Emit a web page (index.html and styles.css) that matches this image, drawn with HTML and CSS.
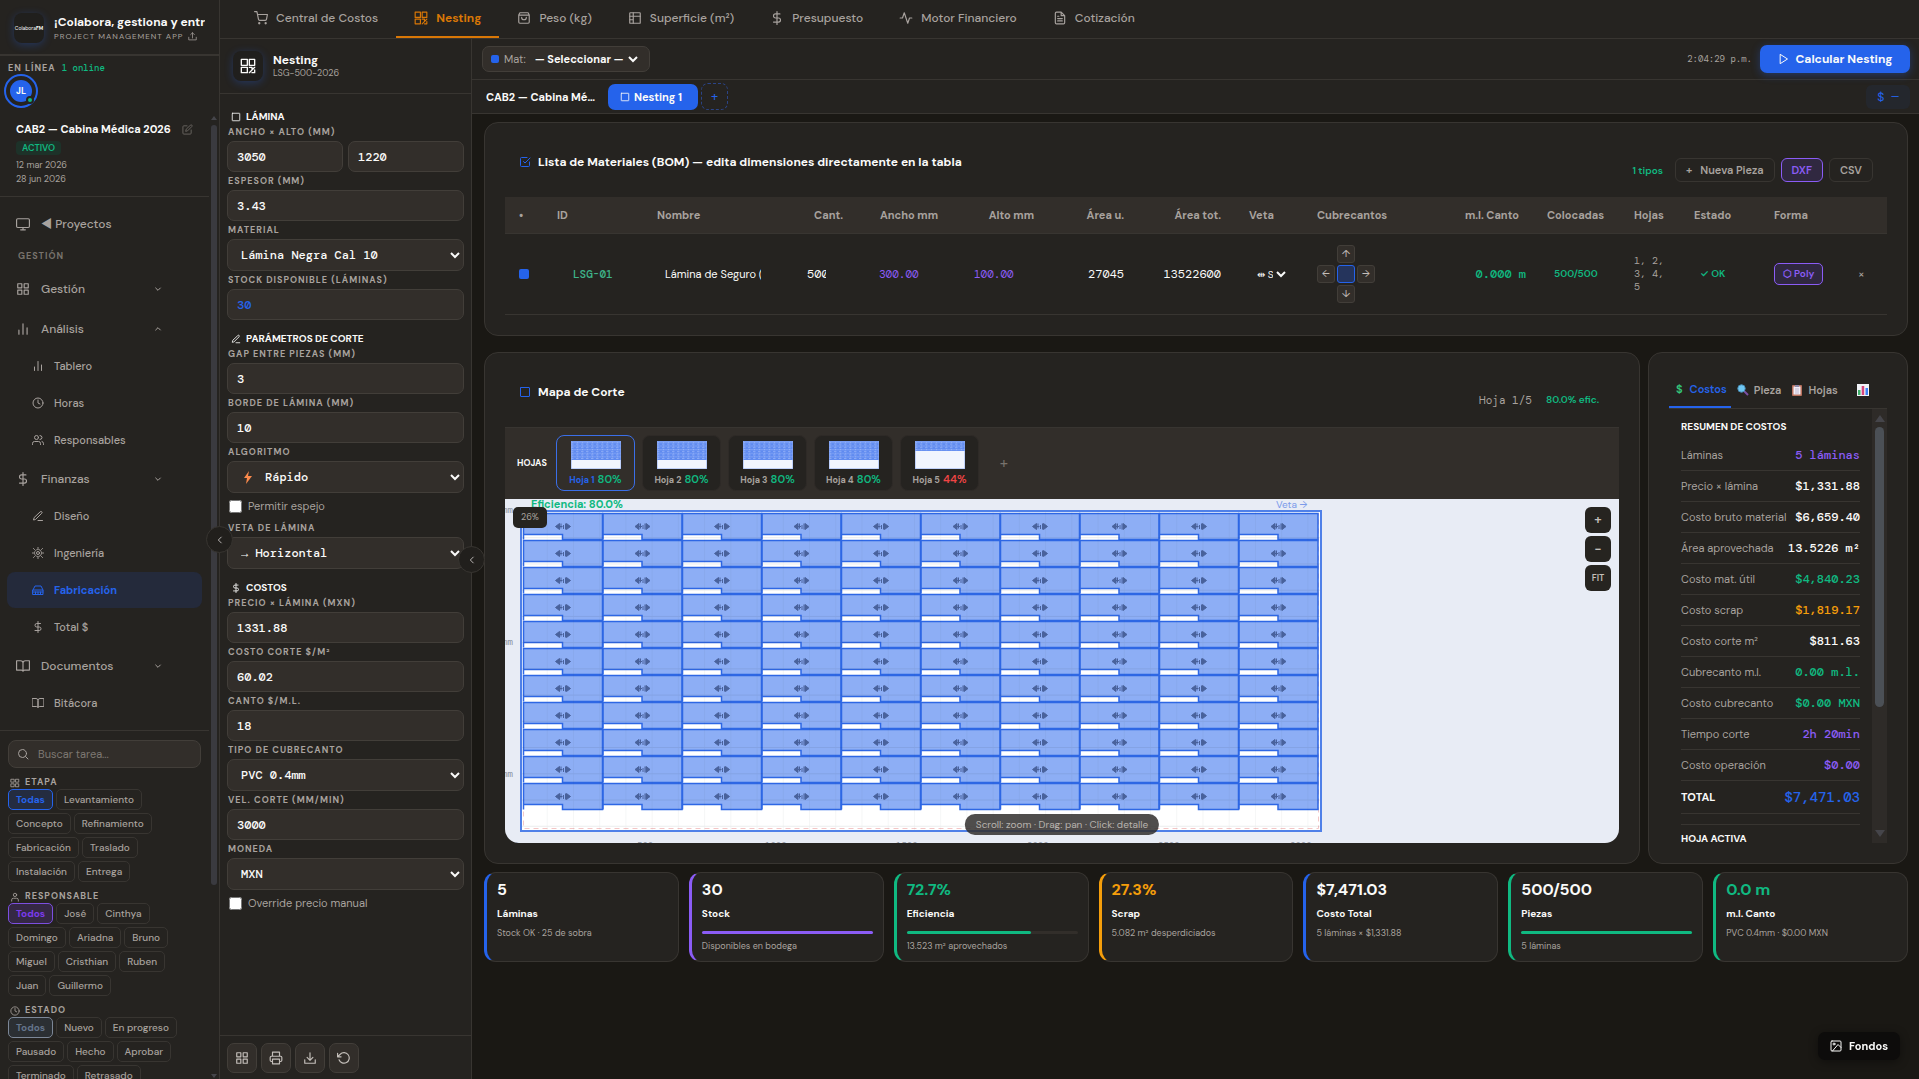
FILE: index.html
```html
<!DOCTYPE html>
<html lang="es">
<head>
  <meta charset="UTF-8" />
  <meta name="viewport" content="width=device-width, initial-scale=1.0"/>
  <title>Nesting — CAB2</title>
  <link rel="stylesheet" href="styles.css">
</head>
<body>

  <!-- Icons -->
  <svg class="sprite" aria-hidden="true">
    <symbol id="i-cart" viewBox="0 0 24 24"><circle cx="9" cy="21" r="1"/><circle cx="20" cy="21" r="1"/><path d="M1 1h4l2.7 13.4a2 2 0 0 0 2 1.6h9.7a2 2 0 0 0 2-1.6L23 6H6"/></symbol>
    <symbol id="i-nest" viewBox="0 0 24 24"><path d="M2 2h9v9H2zM14 2h8v9h-8zM2 14h9v8H2zM14 14h4v4M22 14l-8 8M18 22h4v-4"/></symbol>
    <symbol id="i-bag" viewBox="0 0 24 24"><path d="M5 3h14l2 4v12a2 2 0 0 1-2 2H5a2 2 0 0 1-2-2V7zM3 7h18M8 11a4 4 0 0 0 8 0"/></symbol>
    <symbol id="i-table" viewBox="0 0 24 24"><rect x="3" y="3" width="18" height="18" rx="1"/><path d="M3 9h18M9 3v18M3 15h6"/></symbol>
    <symbol id="i-dollar" viewBox="0 0 24 24"><path d="M12 1v22M17 5H9.500a3.500 3.500 0 0 0 0 7h5a3.500 3.500 0 0 1 0 7H6"/></symbol>
    <symbol id="i-pulse" viewBox="0 0 24 24"><path d="M22 12h-4l-3 9L9 3l-3 9H2"/></symbol>
    <symbol id="i-file" viewBox="0 0 24 24"><path d="M14 2H6a2 2 0 0 0-2 2v16a2 2 0 0 0 2 2h12a2 2 0 0 0 2-2V8zM14 2v6h6M16 13H8M16 17H8M10 9H8"/></symbol>
    <symbol id="i-up" viewBox="0 0 24 24"><path d="M2 14v7h20v-7M17 7l-5-5-5 5M12 2v14"/></symbol>
    <symbol id="i-down" viewBox="0 0 24 24"><path d="M3 15v6h18v-6M7 11l5 5 5-5M12 16V3"/></symbol>
    <symbol id="i-edit" viewBox="0 0 24 24"><path d="M11 4H4a2 2 0 0 0-2 2v14a2 2 0 0 0 2 2h14a2 2 0 0 0 2-2v-7M18.500 2.500a2.100 2.100 0 0 1 3 3L12 15l-4 1 1-4z"/></symbol>
    <symbol id="i-monitor" viewBox="0 0 24 24"><rect x="1" y="3" width="22" height="15" rx="2"/><path d="M8 22h8M12 18v4"/></symbol>
    <symbol id="i-grid" viewBox="0 0 24 24"><path d="M3 3h7v7H3zM14 3h7v7h-7zM14 14h7v7h-7zM3 14h7v7H3z"/></symbol>
    <symbol id="i-bars" viewBox="0 0 24 24"><path d="M19 21V10M12 21V3M5 21v-7"/></symbol>
    <symbol id="i-clock" viewBox="0 0 24 24"><circle cx="12" cy="12" r="10"/><path d="M12 6v6l4 2"/></symbol>
    <symbol id="i-users" viewBox="0 0 24 24"><path d="M17 21v-2a4 4 0 0 0-4-4H5a4 4 0 0 0-4 4v2M23 21v-2a4 4 0 0 0-3-4M16 3a4 4 0 0 1 0 8"/><circle cx="9" cy="7" r="4"/></symbol>
    <symbol id="i-user" viewBox="0 0 24 24"><path d="M20 22v-3a4 4 0 0 0-4-4H8a4 4 0 0 0-4 4v3"/><circle cx="12" cy="7" r="4"/></symbol>
    <symbol id="i-pen" viewBox="0 0 24 24"><path d="M12 21h9M16.500 3.500a2.100 2.100 0 0 1 3 3L7 19l-4 1 1-4z"/></symbol>
    <symbol id="i-gear" viewBox="0 0 24 24"><circle cx="12" cy="12" r="3"/><circle cx="12" cy="12" r="7" stroke-dasharray="3 2"/><path d="M12 1v2M12 21v2M1 12h2M21 12h2M3 3l2 2M19 19l2 2M3 21l2-2M19 5l2-2"/></symbol>
    <symbol id="i-factory" viewBox="0 0 24 24"><path d="M2 12h20v9H2zM2 12l4-8h12l4 8M2 16h20M7 16v5M12 16v5M17 16v5"/></symbol>
    <symbol id="i-book" viewBox="0 0 24 24"><path d="M1 3h7a4 4 0 0 1 4 4v14a3 3 0 0 0-3-2H1zM23 3h-7a4 4 0 0 0-4 4v14a3 3 0 0 1 3-2h8z"/></symbol>
    <symbol id="i-search" viewBox="0 0 24 24"><circle cx="11" cy="11" r="8"/><path d="M22 22l-5-5"/></symbol>
    <symbol id="i-square" viewBox="0 0 24 24"><rect x="3" y="3" width="18" height="18" rx="1"/></symbol>
    <symbol id="i-check" viewBox="0 0 24 24"><path d="M9 11l3 3L22 4M21 12v7a2 2 0 0 1-2 2H5a2 2 0 0 1-2-2V5a2 2 0 0 1 2-2h11"/></symbol>
    <symbol id="i-print" viewBox="0 0 24 24"><path d="M6 9V2h12v7M6 18H4a2 2 0 0 1-2-2v-5a2 2 0 0 1 2-2h16a2 2 0 0 1 2 2v5a2 2 0 0 1-2 2h-2M6 14h12v8H6z"/></symbol>
    <symbol id="i-undo" viewBox="0 0 24 24"><path d="M1 4v6h6M3.500 15a9 9 0 1 0 2-9.400L1 10"/></symbol>
    <symbol id="i-play" viewBox="0 0 24 24"><path d="M5 3l14 9-14 9z"/></symbol>
    <symbol id="i-image" viewBox="0 0 24 24"><rect x="2" y="2" width="20" height="20" rx="2"/><circle cx="8" cy="8" r="2"/><path d="M22 15l-6-6L5 22"/></symbol>
    <symbol id="i-chev" viewBox="0 0 24 24"><path d="M5 9l7 7 7-7"/></symbol>
    <symbol id="i-left" viewBox="0 0 24 24"><path d="M15 5l-7 7 7 7"/></symbol>
  </svg>

  <div class="app">
    <aside class="sidebar">
      <header class="brand">
        <div class="logo">Colabora<b>FM</b></div>
        <div class="brand-text">
          <div class="brand-name">¡Colabora, gestiona y entrega!</div>
          <div class="brand-sub">PROJECT MANAGEMENT APP <svg class="ic s9"><use href="#i-up"/></svg></div>
        </div>
      </header>
      <div class="online">
        <div class="online-title">EN LÍNEA <span>1 online</span></div>
        <div class="avatar"><span>JL</span><i></i></div>
      </div>

      <div class="side-wrap">
        <div class="side-scroll">
          <div class="project">
            <div class="project-name">CAB2 — Cabina Médica 2026 <svg class="ic s11"><use href="#i-edit"/></svg></div>
            <span class="badge">ACTIVO</span>
            <div class="date">12 mar 2026</div>
            <div class="date">28 jun 2026</div>
          </div>
          <nav class="menu">
            <a class="item top" href="#"><svg class="ic s14"><use href="#i-monitor"/></svg>◀ Proyectos</a>
            <div class="menu-label">GESTIÓN</div>
            <div class="group">
              <a class="item" href="#"><svg class="ic s14"><use href="#i-grid"/></svg>Gestión<svg class="ic s8 chev"><use href="#i-chev"/></svg></a>
            </div>
            <div class="group">
              <a class="item" href="#"><svg class="ic s14"><use href="#i-bars"/></svg>Análisis<svg class="ic s8 chev open"><use href="#i-chev"/></svg></a>
              <div class="children">
                <a class="child" href="#"><svg class="ic s12"><use href="#i-bars"/></svg>Tablero</a>
                <a class="child" href="#"><svg class="ic s12"><use href="#i-clock"/></svg>Horas</a>
                <a class="child" href="#"><svg class="ic s12"><use href="#i-users"/></svg>Responsables</a>
              </div>
            </div>
            <div class="group">
              <a class="item" href="#"><svg class="ic s14"><use href="#i-dollar"/></svg>Finanzas<svg class="ic s8 chev"><use href="#i-chev"/></svg></a>
              <div class="children">
                <a class="child" href="#"><svg class="ic s12"><use href="#i-pen"/></svg>Diseño</a>
                <a class="child" href="#"><svg class="ic s12"><use href="#i-gear"/></svg>Ingeniería</a>
                <a class="child active" href="#"><svg class="ic s12"><use href="#i-factory"/></svg>Fabricación</a>
                <a class="child" href="#"><svg class="ic s12"><use href="#i-dollar"/></svg>Total $</a>
              </div>
            </div>
            <div class="group">
              <a class="item" href="#"><svg class="ic s14"><use href="#i-book"/></svg>Documentos<svg class="ic s8 chev"><use href="#i-chev"/></svg></a>
              <div class="children">
                <a class="child" href="#"><svg class="ic s12"><use href="#i-book"/></svg>Bitácora</a>
              </div>
            </div>
          </nav>

          <div class="filters">
            <label class="search"><svg class="ic s12"><use href="#i-search"/></svg><input type="text" placeholder="Buscar tarea..." aria-label="Buscar tarea"></label>
            <div class="filter-title"><svg class="ic s10"><use href="#i-grid"/></svg>ETAPA</div>
            <div class="chips">
              <button class="chip blue">Todas</button><button class="chip">Levantamiento</button><button class="chip">Concepto</button><button class="chip">Refinamiento</button><button class="chip">Fabricación</button><button class="chip">Traslado</button><button class="chip">Instalación</button><button class="chip">Entrega</button>
            </div>
            <div class="filter-title"><svg class="ic s10"><use href="#i-user"/></svg>RESPONSABLE</div>
            <div class="chips">
              <button class="chip purple">Todos</button><button class="chip">José</button><button class="chip">Cinthya</button><button class="chip">Domingo</button><button class="chip">Ariadna</button><button class="chip">Bruno</button><button class="chip">Miguel</button><button class="chip">Cristhian</button><button class="chip">Ruben</button><button class="chip">Juan</button><button class="chip">Guillermo</button>
            </div>
            <div class="filter-title"><svg class="ic s10"><use href="#i-clock"/></svg>ESTADO</div>
            <div class="chips">
              <button class="chip gray">Todos</button><button class="chip">Nuevo</button><button class="chip">En progreso</button><button class="chip">Pausado</button><button class="chip">Hecho</button><button class="chip">Aprobar</button><button class="chip">Terminado</button><button class="chip">Retrasado</button>
            </div>
          </div>
        </div>
        <div class="bar"><span class="arrow up"></span><span class="thumb"></span><span class="arrow"></span></div>
      </div>
      <button class="collapse" aria-label="Contraer menú"><svg class="ic s10"><use href="#i-left"/></svg></button>
    </aside>

    <div class="work">
      <nav class="tabs">
        <a href="#"><svg class="ic s14"><use href="#i-cart"/></svg>Central de Costos</a>
        <a href="#" class="active"><svg class="ic s14"><use href="#i-nest"/></svg>Nesting</a>
        <a href="#"><svg class="ic s14"><use href="#i-bag"/></svg>Peso (kg)</a>
        <a href="#"><svg class="ic s14"><use href="#i-table"/></svg>Superficie (m²)</a>
        <a href="#"><svg class="ic s14"><use href="#i-dollar"/></svg>Presupuesto</a>
        <a href="#"><svg class="ic s14"><use href="#i-pulse"/></svg>Motor Financiero</a>
        <a href="#"><svg class="ic s14"><use href="#i-file"/></svg>Cotización</a>
      </nav>

      <div class="columns">
        <section class="params">
          <header class="params-head">
            <div class="params-icon"><svg class="ic s16"><use href="#i-nest"/></svg></div>
            <div><div class="params-title">Nesting</div><div class="params-sub">LSG-500-2026</div></div>
          </header>
          <form class="fields">
            <h3><svg class="ic s10"><use href="#i-square"/></svg>LÁMINA</h3>
            <label for="ancho">ANCHO × ALTO (MM)</label>
            <div class="pair"><input id="ancho" value="3050"><input id="alto" value="1220" aria-label="Alto (mm)"></div>
            <label for="espesor">ESPESOR (MM)</label>
            <input id="espesor" value="3.43">
            <label for="material">MATERIAL</label>
            <select id="material"><option>Lámina Negra Cal 10</option></select>
            <label for="stock">STOCK DISPONIBLE (LÁMINAS)</label>
            <input id="stock" class="stock" value="30">
            <h3><svg class="ic s10"><use href="#i-pen"/></svg>PARÁMETROS DE CORTE</h3>
            <label for="gap">GAP ENTRE PIEZAS (MM)</label>
            <input id="gap" value="3">
            <label for="borde">BORDE DE LÁMINA (MM)</label>
            <input id="borde" value="10">
            <label for="algoritmo">ALGORITMO</label>
            <div class="with-icon">
              <select id="algoritmo"><option>Rápido</option></select>
              <svg class="bolt" viewBox="0 0 8 13"><path d="M5 0L0 7h3l-1 6 6-8H4z" fill="#fb8a4c"/></svg>
            </div>
            <div class="tick"><input type="checkbox" id="espejo"><label for="espejo">Permitir espejo</label></div>
            <label for="veta">VETA DE LÁMINA</label>
            <select id="veta"><option>→ Horizontal</option></select>
            <h3><svg class="ic s10"><use href="#i-dollar"/></svg>COSTOS</h3>
            <label for="precio">PRECIO × LÁMINA (MXN)</label>
            <input id="precio" value="1331.88">
            <label for="corte">COSTO CORTE $/M²</label>
            <input id="corte" value="60.02">
            <label for="canto">CANTO $/M.L.</label>
            <input id="canto" value="18">
            <label for="cubre">TIPO DE CUBRECANTO</label>
            <select id="cubre"><option>PVC 0.4mm</option></select>
            <label for="vel">VEL. CORTE (MM/MIN)</label>
            <input id="vel" value="3000">
            <label for="moneda">MONEDA</label>
            <select id="moneda"><option>MXN</option></select>
            <div class="tick"><input type="checkbox" id="override"><label for="override">Override precio manual</label></div>
          </form>
          <footer class="params-foot">
            <button aria-label="Cuadrícula"><svg class="ic s14"><use href="#i-grid"/></svg></button>
            <button aria-label="Imprimir"><svg class="ic s14"><use href="#i-print"/></svg></button>
            <button aria-label="Descargar"><svg class="ic s14"><use href="#i-down"/></svg></button>
            <button aria-label="Restablecer"><svg class="ic s14"><use href="#i-undo"/></svg></button>
          </footer>
          <button class="collapse low" aria-label="Contraer parámetros"><svg class="ic s10"><use href="#i-left"/></svg></button>
        </section>

        <main class="main">
          <div class="toolbar">
            <label class="mat"><i class="dot"></i>Mat: <select><option>— Seleccionar —</option></select></label>
            <time class="clock">2:04:29 p.m.</time>
            <button class="primary"><svg class="ic s12"><use href="#i-play"/></svg>Calcular Nesting</button>
          </div>
          <div class="sheets">
            <div class="sheets-name">CAB2 — Cabina Médica 2026</div>
            <button class="sheet-tab"><svg class="ic s10"><use href="#i-square"/></svg>Nesting 1</button>
            <button class="sheet-add" aria-label="Agregar nesting">+</button>
            <div class="sheet-cost">$ —</div>
          </div>

          <div class="content">
            <section class="card bom">
              <header class="card-head">
                <h2><svg class="ic s12"><use href="#i-check"/></svg>Lista de Materiales (BOM) — edita dimensiones directamente en la tabla</h2>
                <div class="actions">
                  <span class="count">1 tipos</span>
                  <button class="small">+&nbsp;&nbsp; Nueva Pieza</button>
                  <button class="small violet">DXF</button>
                  <button class="small">CSV</button>
                </div>
              </header>
              <table class="bom-table">
                <colgroup><col class="w38"><col class="w100"><col class="w142"><col class="w72"><col class="w95"><col class="w96"><col class="w90"><col class="w97"><col class="w68"><col class="w130"><col class="w100"><col class="w87"><col class="w60"><col class="w80"><col class="w80"><col class="w47"></colgroup>
                <thead>
                  <tr><th>•</th><th>ID</th><th>Nombre</th><th class="r">Cant.</th><th class="r">Ancho mm</th><th class="r">Alto mm</th><th class="r">Área u.</th><th class="r">Área tot.</th><th>Veta</th><th>Cubrecantos</th><th class="r">m.l. Canto</th><th>Colocadas</th><th>Hojas</th><th>Estado</th><th>Forma</th><th></th></tr>
                </thead>
                <tbody>
                  <tr>
                    <td><i class="swatch"></i></td>
                    <td class="id">LSG-01</td>
                    <td><input class="cell name" value="Lámina de Seguro (500)" aria-label="Nombre"></td>
                    <td class="r"><input class="cell qty" value="500" aria-label="Cantidad"></td>
                    <td class="r"><input class="cell dim" value="300.00" aria-label="Ancho mm"></td>
                    <td class="r"><input class="cell dim" value="100.00" aria-label="Alto mm"></td>
                    <td class="r mono">27045</td>
                    <td class="r mono">13522600</td>
                    <td><select class="grain" aria-label="Veta"><option>⇹ Seg</option></select></td>
                    <td>
                      <div class="edges"><button class="n" aria-label="Canto superior">↑</button><button class="w" aria-label="Canto izquierdo">←</button><span></span><button class="e" aria-label="Canto derecho">→</button><button class="s" aria-label="Canto inferior">↓</button></div>
                    </td>
                    <td class="r ml">0.000 m</td>
                    <td class="placed">500/500</td>
                    <td class="pages">1, 2, 3, 4, 5</td>
                    <td class="ok">✓ OK</td>
                    <td><button class="poly">⬡ Poly</button></td>
                    <td><button class="del" aria-label="Eliminar">×</button></td>
                  </tr>
                </tbody>
              </table>
            </section>

            <div class="split">
              <section class="card">
                <header class="card-head">
                  <h2><svg class="ic s14"><use href="#i-square"/></svg>Mapa de Corte</h2>
                  <div class="actions map-info"><span class="page">Hoja 1/5</span><span class="count">80.0% efic.</span></div>
                </header>
                <div class="strip">
                  <span class="strip-label">HOJAS</span>
                  <button class="leaf on"><svg viewBox="0 0 50 28"><rect width="50" height="28" fill="#f1f5fe"/><rect width="50" height="19" fill="url(#mini)"/><path d="M0 0h50v28H0z" fill="none" stroke="#8fadf5"/></svg><span>Hoja 1 <b>80%</b></span></button>
                  <button class="leaf"><svg viewBox="0 0 50 28"><rect width="50" height="28" fill="#f1f5fe"/><rect width="50" height="19" fill="url(#mini)"/><path d="M0 0h50v28H0z" fill="none" stroke="#8fadf5"/></svg><span>Hoja 2 <b>80%</b></span></button>
                  <button class="leaf"><svg viewBox="0 0 50 28"><rect width="50" height="28" fill="#f1f5fe"/><rect width="50" height="19" fill="url(#mini)"/><path d="M0 0h50v28H0z" fill="none" stroke="#8fadf5"/></svg><span>Hoja 3 <b>80%</b></span></button>
                  <button class="leaf"><svg viewBox="0 0 50 28"><rect width="50" height="28" fill="#f1f5fe"/><rect width="50" height="19" fill="url(#mini)"/><path d="M0 0h50v28H0z" fill="none" stroke="#8fadf5"/></svg><span>Hoja 4 <b>80%</b></span></button>
                  <button class="leaf bad"><svg viewBox="0 0 50 28"><rect width="50" height="28" fill="#f1f5fe"/><rect width="50" height="10" fill="url(#mini)"/><path d="M0 0h50v28H0z" fill="none" stroke="#8fadf5"/></svg><span>Hoja 5 <b>44%</b></span></button>
                  <button class="leaf-add" aria-label="Agregar hoja">+</button>
                </div>
                <div class="map">
                  <svg class="map-svg" width="100%" height="344">
                    <defs>
                      <pattern id="mini" width="5" height="3.600" patternUnits="userSpaceOnUse"><rect width="5" height="3.600" fill="#608bf0"/><path d="M.5 1.500h2M3.500 1.500h1" stroke="#94b2f8"/><path d="M0 3.200h2.500" stroke="#a9c0f8" stroke-width=".6"/></pattern>
                      <pattern id="gridlines" x="15.500" y="12" width="26.230" height="26.230" patternUnits="userSpaceOnUse"><path d="M0 0v26.230M0 .5h26.230" stroke="#1e293b" stroke-opacity=".09"/></pattern>
                      <g id="piece">
                        <path d="M0 0H79V26H39V21H0Z" fill="#2563eb" fill-opacity=".52"/>
                        <path d="M0 26V0H79V26H39V21H0" fill="none" stroke="#2e67e4" stroke-width="1.500"/>
                        <path d="M32 13l4-3v6zM47 13l-4-3v6zM34 13h5M37.500 10v5M40 11.500v4M42 10v6" fill="#33497f" stroke="#33497f" opacity=".75"/>
                      </g>
                      <g id="line"><use href="#piece"/><use href="#piece" x="79.500"/><use href="#piece" x="159"/><use href="#piece" x="238.500"/><use href="#piece" x="318"/><use href="#piece" x="397.500"/><use href="#piece" x="477"/><use href="#piece" x="556.500"/><use href="#piece" x="636"/><use href="#piece" x="715.500"/></g>
                    </defs>
                    <rect x="16" y="12" width="800" height="320" fill="#fff"/>
                    <rect x="18.500" y="14.500" width="795" height="315" fill="none" stroke="#f3c6c6" stroke-dasharray="5 4"/>
                    <g transform="translate(18.500 14.500)">
                      <use href="#line"/><use href="#line" y="27"/><use href="#line" y="54"/><use href="#line" y="81"/><use href="#line" y="108"/><use href="#line" y="135"/><use href="#line" y="162"/><use href="#line" y="189"/><use href="#line" y="216"/><use href="#line" y="243"/><use href="#line" y="270"/>
                    </g>
                    <rect x="16" y="12" width="800" height="320" fill="url(#gridlines)"/>
                    <rect x="16" y="12" width="800" height="320" fill="none" stroke="#4f80e8" stroke-width="2"/>
                    <text class="eff" x="26" y="9">Eficiencia: 80.0%</text>
                    <text class="veta" x="771" y="9">Veta →</text>
                    <g class="axis">
                      <text x="8" y="350">0</text><text x="132" y="350">500</text><text x="260" y="350">1000</text><text x="391" y="350">1500</text><text x="522" y="350">2000</text><text x="653" y="350">2500</text><text x="785" y="350">3000</text>
                      <text x="-3" y="14">mm</text><text x="-3" y="146">mm</text><text x="-3" y="278">mm</text>
                    </g>
                  </svg>
                  <span class="zoom-level">26%</span>
                  <div class="zoom"><button aria-label="Acercar">+</button><button aria-label="Alejar">−</button><button class="fit">FIT</button></div>
                  <div class="hint">Scroll: zoom · Drag: pan · Click: detalle</div>
                </div>
              </section>

              <section class="card info">
                <nav class="info-tabs">
                  <a href="#" class="active"><span class="cash">$</span> Costos</a>
                  <a href="#"><svg class="em" viewBox="0 0 12 12"><path d="M7 7l4 4" stroke="#7b4fa3" stroke-width="2"/><circle cx="4.500" cy="4.500" r="3.700" fill="#6fc7f2" stroke="#4a8fb8"/></svg>Pieza</a>
                  <a href="#"><svg class="em" viewBox="0 0 12 12"><rect x="1" y="1" width="10" height="11" rx="1" fill="#b8705c"/><path d="M2.500 2.500h7v8h-7z" fill="#f4eef6"/><path d="M4 1h4v2H4z" fill="#8f8aa8"/><path d="M4 5h4M4 7h4M4 9h4" stroke="#a7a0c0" stroke-width=".7"/></svg>Hojas</a>
                  <a href="#" aria-label="Gráficas"><svg class="em" viewBox="0 0 12 12"><path d="M0 0h12v12H0z" fill="#f1f3f8"/><path d="M1 6h2.500v5H1z" fill="#3fae6a"/><path d="M4.700 2h2.500v9H4.700z" fill="#d8467c"/><path d="M8.500 4H11v7H8.500z" fill="#3b82f6"/></svg></a>
                </nav>
                <div class="info-body">
                  <div class="info-list">
                    <h4>RESUMEN DE COSTOS</h4>
                    <dl>
                      <div><dt>Láminas</dt><dd class="violet-t">5 láminas</dd></div>
                      <div><dt>Precio × lámina</dt><dd>$1,331.88</dd></div>
                      <div><dt>Costo bruto material</dt><dd>$6,659.40</dd></div>
                      <div><dt>Área aprovechada</dt><dd>13.5226 m²</dd></div>
                      <div><dt>Costo mat. útil</dt><dd class="green-t">$4,840.23</dd></div>
                      <div><dt>Costo scrap</dt><dd class="amber-t">$1,819.17</dd></div>
                      <div><dt>Costo corte m²</dt><dd>$811.63</dd></div>
                      <div><dt>Cubrecanto m.l.</dt><dd class="green-t">0.00 m.l.</dd></div>
                      <div><dt>Costo cubrecanto</dt><dd class="green-t">$0.00 MXN</dd></div>
                      <div><dt>Tiempo corte</dt><dd class="violet-t">2h 20min</dd></div>
                      <div><dt>Costo operación</dt><dd class="violet-t">$0.00</dd></div>
                      <div class="total"><dt>TOTAL</dt><dd>$7,471.03</dd></div>
                    </dl>
                    <h4 class="next">HOJA ACTIVA</h4>
                  </div>
                  <div class="bar wide"><span class="arrow up"></span><span class="thumb"></span><span class="arrow"></span></div>
                </div>
              </section>
            </div>

            <div class="kpis">
              <div class="kpi blue-k"><strong>5</strong><h5>Láminas</h5><p>Stock OK · 25 de sobra</p></div>
              <div class="kpi violet-k"><strong>30</strong><h5>Stock</h5><div class="meter"><i style="width:100%"></i></div><p>Disponibles en bodega</p></div>
              <div class="kpi green-k"><strong class="green-t">72.7%</strong><h5>Eficiencia</h5><div class="meter"><i style="width:72.7%"></i></div><p>13.523 m² aprovechados</p></div>
              <div class="kpi amber-k"><strong class="amber-t">27.3%</strong><h5>Scrap</h5><p>5.082 m² desperdiciados</p></div>
              <div class="kpi blue-k"><strong>$7,471.03</strong><h5>Costo Total</h5><p>5 láminas × $1,331.88</p></div>
              <div class="kpi green-k"><strong>500/500</strong><h5>Piezas</h5><div class="meter"><i style="width:100%"></i></div><p>5 láminas</p></div>
              <div class="kpi green-k"><strong class="green-t">0.0 m</strong><h5>m.l. Canto</h5><p>PVC 0.4mm · $0.00 MXN</p></div>
            </div>
          </div>
        </main>
      </div>
    </div>
  </div>

  <button class="fondos"><svg class="ic s12"><use href="#i-image"/></svg>Fondos</button>

</body>
</html>
```
FILE: styles.css
```css
:root {
  --bg: #1a1814;
  --panel: #252320;
  --field: #322e2a;
  --line: #383531;
  --muted: #a8a29e;
  --text: #fafaf9;
  --blue: #2563eb;
  --green: #10b981;
  --violet: #8b5cf6;
  --amber: #f59e0b;
  --mono: "DM Mono", "Liberation Mono", monospace;
}

* {
  box-sizing: border-box;
}

body {
  margin: 0;
  height: 100vh;
  overflow: hidden;
  background: var(--bg);
  color: var(--text);
  font-family: "DM Sans", Inter, sans-serif;
  font-size: 12px;
}

button,
input,
select {
  font: inherit;
  color: inherit;
  margin: 0;
}

button {
  padding: 0;
  cursor: pointer;
}

a {
  color: inherit;
  text-decoration: none;
}

h2, h3, h4, h5, p, dl, dd {
  margin: 0;
}

.sprite {
  position: absolute;
  width: 0;
  height: 0;
}

.ic {
  flex: none;
  fill: none;
  stroke: currentColor;
  stroke-width: 2;
  stroke-linecap: round;
  stroke-linejoin: round;
}

.s8 { width: 8px; height: 8px; }
.s9 { width: 9px; height: 9px; }
.s10 { width: 10px; height: 10px; }
.s11 { width: 11px; height: 11px; }
.s12 { width: 12px; height: 12px; }
.s14 { width: 14px; height: 14px; }
.s16 { width: 16px; height: 16px; }

.app {
  display: grid;
  grid-template-columns: 220px minmax(0, 1fr);
  height: 100%;
}

/* Sidebar */
.sidebar {
  position: relative;
  display: flex;
  flex-direction: column;
  min-height: 0;
  background: var(--panel);
  border-right: 1px solid var(--line);
}

.brand {
  display: flex;
  align-items: center;
  gap: 10px;
  height: 56px;
  flex: none;
  padding: 2px 14px 0;
  border-bottom: 2px solid var(--line);
}

.logo {
  display: flex;
  align-items: center;
  justify-content: center;
  flex: none;
  width: 30px;
  height: 30px;
  border-radius: 8px;
  background: #201f1d;
  box-shadow: 0 2px 8px rgba(37, 99, 235, .3);
  font-size: 5px;
}

.brand-text {
  min-width: 0;
}

.brand-name {
  overflow: hidden;
  white-space: nowrap;
  font-size: 12px;
  line-height: 16px;
  font-weight: 700;
}

.brand-sub {
  display: flex;
  align-items: center;
  gap: 5px;
  color: var(--muted);
  font-size: 8px;
  line-height: 12px;
  letter-spacing: 1px;
  white-space: nowrap;
}

.online {
  height: 59px;
  flex: none;
  padding: 6px 4px 0;
}

.online-title {
  padding-left: 4px;
  color: var(--muted);
  font-size: 9px;
  line-height: 12px;
  font-weight: 700;
  letter-spacing: 1px;
}

.online-title span {
  margin-left: 3px;
  color: var(--green);
  font-family: var(--mono);
  letter-spacing: 0;
}

.avatar {
  position: relative;
  display: flex;
  align-items: center;
  justify-content: center;
  width: 34px;
  height: 34px;
  border: 2px solid var(--blue);
  border-radius: 50%;
}

.avatar span {
  width: 22px;
  border-radius: 50%;
  background: var(--blue);
  font-size: 9px;
  line-height: 22px;
  font-weight: 700;
  text-align: center;
}

.avatar i {
  position: absolute;
  right: 2px;
  bottom: 2px;
  width: 8px;
  height: 8px;
  border: 2px solid var(--panel);
  border-radius: 50%;
  background: var(--green);
}

.side-wrap {
  display: flex;
  flex: 1;
  min-height: 0;
}

.side-scroll {
  flex: 1;
  min-width: 0;
  overflow: hidden;
}

.bar {
  display: flex;
  flex-direction: column;
  align-items: center;
  justify-content: space-between;
  gap: 5px;
  width: 10px;
  flex: none;
  padding: 1px 2px;
}

.bar .thumb {
  width: 6px;
  height: 79%;
  margin-bottom: auto;
  border-radius: 3px;
  background: #3a3a3f;
}

.arrow {
  border: 3px solid transparent;
  border-top: 4px solid #45454a;
  border-bottom: 0;
}

.arrow.up {
  border-top: 0;
  border-bottom: 4px solid #45454a;
}

.project {
  padding: 6px 16px 10px;
  border-bottom: 1px solid var(--line);
}

.project-name {
  display: flex;
  align-items: center;
  justify-content: space-between;
  font-size: 11px;
  line-height: 16px;
  font-weight: 700;
  white-space: nowrap;
}

.project-name .ic {
  color: #6b6762;
}

.badge {
  display: block;
  width: max-content;
  margin: 4px 0 3px;
  padding: 0 6px;
  border-radius: 4px;
  background: #1d3229;
  color: var(--green);
  font-size: 9px;
  line-height: 14px;
  font-weight: 600;
}

.date {
  color: var(--muted);
  font-size: 9px;
  line-height: 14px;
}

.menu {
  padding: 7px 7px 8px;
  border-bottom: 1px solid var(--line);
  color: var(--muted);
}

.item {
  display: flex;
  align-items: center;
  gap: 11px;
  height: 39px;
  padding: 0 9px;
  font-size: 12px;
  font-weight: 500;
}

.item .chev {
  margin: 0 31px 0 auto;
  stroke-width: 3;
}

.chev.open {
  transform: rotate(180deg);
}

.menu-label {
  padding: 0 11px;
  color: #78736d;
  font-size: 9px;
  line-height: 26px;
  font-weight: 700;
  letter-spacing: 1px;
}

.group {
  margin-bottom: 1px;
}

.children {
  display: flex;
  flex-direction: column;
  gap: 1px;
}

.child {
  display: flex;
  align-items: center;
  gap: 10px;
  height: 36px;
  padding: 0 25px;
  border-radius: 8px;
  font-size: 11px;
  font-weight: 500;
}

.child.active {
  background: #242a3b;
  color: var(--blue);
  font-weight: 700;
}

.filters {
  padding: 9px 8px 0;
}

.search {
  display: flex;
  align-items: center;
  gap: 9px;
  height: 28px;
  padding: 0 8px;
  border: 1px solid #423e39;
  border-radius: 8px;
  background: var(--field);
  color: var(--muted);
}

.search input {
  width: 100%;
  padding: 0;
  border: 0;
  background: none;
  font-size: 11px;
}

.search input::placeholder {
  color: #7d7872;
}

.filter-title {
  display: flex;
  align-items: center;
  gap: 5px;
  padding: 8px 2px 0;
  color: var(--muted);
  font-size: 9px;
  line-height: 13px;
  font-weight: 700;
  letter-spacing: 1px;
}

.chips {
  display: flex;
  flex-wrap: wrap;
  gap: 3px;
}

.chip {
  height: 21px;
  padding: 0 7px;
  border: 1px solid var(--line);
  border-radius: 5px;
  background: none;
  color: var(--muted);
  font-size: 10px;
  font-weight: 500;
}

.chip.blue {
  border-color: var(--blue);
  background: #242c40;
  color: var(--blue);
  font-weight: 700;
}

.chip.purple {
  border-color: #7c4fe0;
  background: #352845;
  color: #7c3aed;
  font-weight: 700;
}

.chip.gray {
  border-color: #7c8797;
  background: #2b2f33;
  color: #64748b;
  font-weight: 700;
}

.collapse {
  position: absolute;
  z-index: 2;
  top: 526px;
  right: -14px;
  display: flex;
  align-items: center;
  justify-content: center;
  width: 27px;
  height: 27px;
  border: 1px solid var(--line);
  border-radius: 50%;
  background: #211f1c;
  color: #d6d3d1;
}

.collapse.low {
  top: 507px;
}

/* Top tabs */
.work {
  display: flex;
  flex-direction: column;
  min-height: 0;
}

.tabs {
  display: flex;
  height: 39px;
  flex: none;
  padding: 0 16px;
  border-bottom: 1px solid var(--line);
  background: var(--panel);
}

.tabs a {
  display: flex;
  align-items: center;
  gap: 8px;
  padding: 0 18px 2px;
  color: var(--muted);
  font-size: 12px;
  font-weight: 500;
}

.tabs .active {
  padding-bottom: 0;
  border-bottom: 2px solid #d97706;
  color: #d97706;
  font-weight: 700;
}

.columns {
  display: grid;
  grid-template-columns: 252px minmax(0, 1fr);
  flex: 1;
  min-height: 0;
}

/* Parameters */
.params {
  position: relative;
  display: flex;
  flex-direction: column;
  min-height: 0;
  border-right: 1px solid var(--line);
  background: var(--panel);
}

.params-head {
  display: flex;
  align-items: center;
  gap: 10px;
  height: 55px;
  flex: none;
  padding: 0 13px;
  border-bottom: 1px solid var(--line);
}

.params-icon {
  display: flex;
  align-items: center;
  justify-content: center;
  width: 30px;
  height: 30px;
  border-radius: 8px;
  background: #201f1d;
  box-shadow: 0 2px 8px rgba(37, 99, 235, .3);
}

.params-title {
  font-size: 12px;
  line-height: 14px;
  font-weight: 700;
}

.params-sub {
  color: var(--muted);
  font-size: 9px;
  line-height: 12px;
}

.fields {
  flex: 1;
  min-height: 0;
  overflow: hidden;
  padding: 4px 7px;
}

.fields h3 {
  display: flex;
  align-items: center;
  gap: 5px;
  padding: 12px 4px 0;
  font-size: 10px;
  line-height: 13px;
  font-weight: 700;
}

.fields > label {
  display: block;
  padding: 2px 1px;
  color: var(--muted);
  font-size: 9px;
  line-height: 14px;
  font-weight: 700;
  letter-spacing: 1px;
}

.fields input:not([type]),
.fields select {
  display: block;
  width: 100%;
  height: 31px;
  padding: 0 9px;
  border: 1px solid #423e39;
  border-radius: 7px;
  background: var(--field);
  font-family: var(--mono);
  font-size: 12px;
  font-weight: 600;
}

.fields select {
  height: 32px;
  padding: 0 0 0 9px;
}

.fields .stock {
  border-color: #27408a;
  background: #25272e;
  color: var(--blue);
  font-weight: 700;
}

.pair {
  display: grid;
  grid-template-columns: 1fr 1fr;
  gap: 5px;
}

.with-icon {
  position: relative;
}

.with-icon .bolt + select,
.with-icon select {
  padding-left: 33px;
}

.bolt {
  position: absolute;
  top: 10px;
  left: 17px;
  width: 8px;
  height: 13px;
}

.tick {
  display: flex;
  align-items: center;
  gap: 6px;
  height: 26px;
  padding: 0 2px;
  color: var(--muted);
  font-size: 11px;
}

.tick input {
  width: 13px;
  height: 13px;
}

.params-foot {
  display: flex;
  gap: 4px;
  flex: none;
  height: 44px;
  padding: 7px;
  border-top: 1px solid var(--line);
}

.params-foot button {
  display: flex;
  align-items: center;
  justify-content: center;
  width: 30px;
  height: 30px;
  border: 1px solid #423e39;
  border-radius: 7px;
  background: var(--field);
  color: #c4bfba;
}

/* Main */
.main {
  min-width: 0;
}

.toolbar,
.sheets {
  display: flex;
  align-items: center;
  border-bottom: 1px solid var(--line);
  background: var(--panel);
}

.toolbar {
  gap: 8px;
  height: 41px;
  padding: 0 9px 0 10px;
}

.mat {
  display: flex;
  align-items: center;
  gap: 5px;
  height: 26px;
  padding: 0 8px;
  border: 1px solid #423e39;
  border-radius: 7px;
  background: var(--field);
  color: var(--muted);
  font-size: 11px;
}

.dot {
  width: 8px;
  height: 8px;
  border-radius: 2px;
  background: var(--blue);
}

.mat select {
  border: 0;
  background: none;
  color: var(--text);
  font-weight: 700;
}

.clock {
  margin-left: auto;
  color: var(--muted);
  font-family: var(--mono);
  font-size: 9px;
}

.primary {
  display: flex;
  align-items: center;
  justify-content: center;
  gap: 6px;
  min-width: 150px;
  height: 28px;
  border: 0;
  border-radius: 7px;
  background: var(--blue);
  box-shadow: 0 2px 8px rgba(37, 99, 235, .35);
  font-size: 12px;
  font-weight: 700;
}

.sheets {
  gap: 3px;
  height: 34px;
  padding: 0 9px 0 14px;
}

.sheets-name {
  width: 110px;
  margin-right: 9px;
  overflow: hidden;
  text-overflow: ellipsis;
  white-space: nowrap;
  font-size: 11px;
  font-weight: 700;
}

.sheet-tab {
  display: flex;
  align-items: center;
  justify-content: center;
  gap: 4px;
  width: 90px;
  height: 26px;
  padding-right: 4px;
  border: 0;
  border-radius: 7px;
  background: var(--blue);
  font-size: 11px;
  font-weight: 700;
}

.sheet-add {
  width: 27px;
  height: 27px;
  border: 1px dashed #2b4486;
  border-radius: 7px;
  background: none;
  color: var(--blue);
  font-size: 13px;
}

.sheet-cost {
  margin-left: auto;
  width: 44px;
  border-radius: 6px;
  background: #24272d;
  color: var(--blue);
  font-family: var(--mono);
  font-size: 12px;
  line-height: 24px;
  text-align: center;
}

.content {
  display: flex;
  flex-direction: column;
  padding: 8px 11px 0 12px;
}

.card {
  min-width: 0;
  padding: 20px;
  border: 1px solid var(--line);
  border-radius: 14px;
  background: var(--panel);
}

.bom {
  margin-bottom: 16px;
}

.card-head {
  display: flex;
  align-items: center;
  justify-content: space-between;
  height: 54px;
  padding: 0 14px;
}

.card-head h2 {
  display: flex;
  align-items: center;
  gap: 7px;
  padding-bottom: 16px;
  font-size: 12px;
  font-weight: 700;
}

.card-head h2 .ic {
  width: 12px;
  height: 12px;
  color: var(--blue);
}

.actions {
  display: flex;
  align-items: center;
  gap: 6px;
}

.map-info {
  gap: 14px;
}

.count {
  margin-right: 6px;
  color: var(--green);
  font-size: 10px;
  font-weight: 600;
}

.page {
  color: var(--muted);
  font-family: var(--mono);
  font-size: 11px;
}

.small {
  height: 24px;
  padding: 0 10px;
  border: 1px solid var(--line);
  border-radius: 6px;
  background: none;
  color: var(--muted);
  font-size: 11px;
  font-weight: 600;
}

.small.violet,
.poly {
  border: 1px solid var(--violet);
  background: #302840;
  color: var(--violet);
}

.bom-table {
  width: 100%;
  table-layout: fixed;
  border-collapse: collapse;
}

.w38 { width: 38px; }
.w47 { width: 47px; }
.w60 { width: 60px; }
.w68 { width: 68px; }
.w72 { width: 72px; }
.w80 { width: 80px; }
.w87 { width: 87px; }
.w90 { width: 90px; }
.w95 { width: 95px; }
.w96 { width: 96px; }
.w97 { width: 97px; }
.w100 { width: 100px; }
.w130 { width: 130px; }
.w142 { width: 142px; }

.bom-table th,
.bom-table td {
  padding: 0 14px;
  border-bottom: 1px solid var(--line);
  text-align: left;
  white-space: nowrap;
}

.bom-table th {
  height: 36px;
  background: var(--field);
  color: var(--muted);
  font-size: 11px;
  font-weight: 700;
}

.bom-table td {
  height: 81px;
}

.bom-table .r {
  text-align: right;
}

.bom-table .id {
  padding-left: 30px;
  color: #3eb489;
  font-family: var(--mono);
  font-size: 11px;
  font-weight: 700;
}

.mono {
  font-family: var(--mono);
  font-size: 12px;
}

.swatch {
  display: block;
  width: 10px;
  height: 10px;
  border-radius: 2px;
  background: var(--blue);
}

.cell {
  padding: 0 22px 0 8px;
  border: 0;
  background: none;
  font-family: var(--mono);
}

.cell.name {
  width: 112px;
  padding-right: 8px;
  font-family: inherit;
  font-size: 11px;
}

.cell.qty {
  width: 49px;
}

.cell.dim {
  width: 70px;
  color: var(--violet);
  font-size: 11px;
}

.grain {
  width: 36px;
  margin-left: 4px;
  border: 0;
  background: none;
  font-size: 10px;
}

.edges {
  display: grid;
  grid-template-columns: repeat(3, 18px);
  grid-template-areas: ". n ." "w c e" ". s .";
  gap: 2px;
}

.edges button,
.edges span {
  height: 18px;
  border: 1px solid #423e39;
  border-radius: 3px;
  background: var(--field);
  color: #c4bfba;
  font-size: 10px;
  line-height: 14px;
}

.edges .n { grid-area: n; }
.edges .w { grid-area: w; }
.edges .e { grid-area: e; }
.edges .s { grid-area: s; }

.edges span {
  grid-area: c;
  border-color: var(--blue);
  background: #25345c;
}

.bom-table .ml {
  padding: 0 7px 0 0;
  color: var(--green);
  font-family: var(--mono);
  font-size: 12px;
  font-weight: 700;
}

.bom-table .placed {
  padding-left: 21px;
  color: var(--green);
  font-size: 10px;
  font-weight: 600;
}

.bom-table .pages {
  color: var(--muted);
  font-family: var(--mono);
  font-size: 10px;
  line-height: 13px;
  white-space: normal;
}

.bom-table .ok {
  padding-left: 20px;
  color: var(--green);
  font-size: 10px;
  font-weight: 600;
}

.poly {
  width: 49px;
  height: 22px;
  border-radius: 5px;
  font-size: 10px;
  font-weight: 600;
}

.del {
  padding-left: 4px;
  border: 0;
  background: none;
  color: var(--muted);
}

/* Cut map */
.split {
  display: grid;
  grid-template-columns: minmax(0, 1fr) 260px;
  gap: 8px;
  margin-bottom: 8px;
}

.strip {
  display: flex;
  align-items: center;
  gap: 7px;
  height: 72px;
  padding: 0 12px;
  border-top: 1px solid var(--line);
  background: var(--field);
}

.strip-label {
  width: 32px;
  font-size: 9px;
  font-weight: 700;
}

.leaf {
  display: flex;
  flex-direction: column;
  align-items: center;
  gap: 3px;
  width: 79px;
  height: 56px;
  padding-top: 5px;
  border: 1px solid #2e2a27;
  border-radius: 8px;
  background: var(--panel);
  color: var(--muted);
  font-size: 9px;
  line-height: 14px;
  font-weight: 700;
}

.leaf svg {
  width: 50px;
  height: 28px;
}

.leaf b {
  margin-left: 1px;
  color: var(--green);
  font-size: 11px;
  font-weight: 600;
}

.leaf.on {
  border-color: #3b6fe8;
  background: none;
  color: var(--blue);
}

.leaf.bad b {
  color: #ef4444;
}

.leaf-add {
  width: 36px;
  border: 0;
  background: none;
  color: #78736d;
  font-size: 15px;
}

.map {
  position: relative;
  overflow: hidden;
  border-radius: 0 0 14px 14px;
  background: #e8ecf5;
}

.map-svg {
  display: block;
}

.eff {
  fill: var(--green);
  font-size: 11px;
  font-weight: 700;
}

.veta {
  fill: #7c9bea;
  font-size: 10px;
}

.axis {
  fill: #8a919e;
  font-family: var(--mono);
  font-size: 9px;
}

.zoom-level {
  position: absolute;
  top: 8px;
  left: 8px;
  width: 34px;
  border-radius: 5px;
  background: #262420;
  color: var(--muted);
  font-size: 9px;
  line-height: 21px;
  text-align: center;
}

.zoom {
  position: absolute;
  top: 8px;
  right: 8px;
  display: flex;
  flex-direction: column;
  gap: 3px;
}

.zoom button {
  width: 26px;
  height: 26px;
  border: 0;
  border-radius: 6px;
  background: #262420;
  color: #c4bfba;
  font-size: 13px;
  font-weight: 600;
}

.zoom .fit {
  font-size: 9px;
}

.hint {
  position: absolute;
  bottom: 8px;
  left: 50%;
  transform: translateX(-50%);
  padding: 0 11px;
  border-radius: 10px;
  background: rgba(50, 48, 46, .86);
  color: #b8b3ae;
  font-size: 10px;
  line-height: 21px;
  white-space: nowrap;
}

/* Cost panel */
.info {
  display: flex;
  flex-direction: column;
}

.info-tabs {
  display: flex;
  height: 36px;
  border-bottom: 1px solid var(--line);
  color: var(--muted);
  font-size: 11px;
  font-weight: 600;
}

.info-tabs a {
  display: flex;
  align-items: center;
  gap: 5px;
  margin-right: 10px;
}

.info-tabs .active {
  margin-right: 6px;
  padding: 0 4px 0 7px;
  border-bottom: 2px solid var(--blue);
  color: var(--blue);
}

.info-tabs .cash {
  margin-right: 2px;
  color: #34c77b;
}

.info-tabs a:last-child {
  margin: 0 18px 0 auto;
}

.em {
  width: 12px;
  height: 12px;
}

.info-body {
  display: flex;
  flex: 1;
  min-height: 0;
}

.info-list {
  flex: 1;
  height: 434px;
  overflow: hidden;
  padding: 10px 12px 0;
}

.info-list h4 {
  font-size: 10px;
  line-height: 16px;
  font-weight: 700;
}

.info-list dl {
  padding-top: 5px;
}

.info-list dl div {
  display: flex;
  align-items: center;
  justify-content: space-between;
  height: 31px;
  border-bottom: 1px solid var(--line);
  white-space: nowrap;
}

.info-list dt {
  color: var(--muted);
  font-size: 11px;
}

.info-list dd {
  font-family: var(--mono);
  font-size: 12px;
  font-weight: 700;
}

.info-list dl .total {
  height: 33px;
}

.info-list .total dt {
  color: var(--text);
  font-size: 11px;
  font-weight: 700;
}

.info-list .total dd {
  color: var(--blue);
  font-size: 14px;
}

.info-list .next {
  margin-top: 10px;
  padding-top: 6px;
  border-top: 1px solid var(--line);
}

.bar.wide {
  width: 15px;
  padding: 6px 2px;
  background: #2e2b28;
}

.wide .thumb {
  width: 9px;
  height: 280px;
  border-radius: 5px;
  background: #4b5056;
}

.wide .arrow {
  border-width: 7px 5px 0;
}

.wide .arrow.up {
  border-width: 0 5px 7px;
}

.violet-t { color: var(--violet); }
.green-t { color: var(--green); }
.amber-t { color: var(--amber); }

/* KPI cards */
.kpis {
  display: grid;
  grid-template-columns: repeat(7, 1fr);
  gap: 10px;
}

.kpi {
  height: 90px;
  padding: 6px 10px 0;
  border: 1px solid var(--line);
  border-left: 3px solid var(--blue);
  border-radius: 12px;
  background: var(--panel);
}

.violet-k { border-left-color: var(--violet); }
.green-k { border-left-color: var(--green); }
.amber-k { border-left-color: var(--amber); }

.kpi strong {
  display: block;
  font-size: 16px;
  line-height: 22px;
}

.kpi h5 {
  padding-top: 4px;
  font-size: 10px;
  line-height: 17px;
}

.kpi p {
  padding-top: 4px;
  color: var(--muted);
  font-size: 9px;
  line-height: 14px;
}

.meter {
  height: 3px;
  margin: 9px 0 1px;
  border-radius: 2px;
  background: var(--field);
}

.meter i {
  display: block;
  height: 100%;
  border-radius: 2px;
  background: var(--green);
}

.violet-k .meter i {
  background: var(--violet);
}

.fondos {
  position: fixed;
  right: 19px;
  bottom: 19px;
  display: flex;
  align-items: center;
  justify-content: center;
  gap: 7px;
  width: 82px;
  height: 28px;
  border: 0;
  border-radius: 7px;
  background: #0d0c0b;
  box-shadow: 0 2px 10px rgba(0, 0, 0, .4);
  font-size: 11px;
  font-weight: 700;
}
```
